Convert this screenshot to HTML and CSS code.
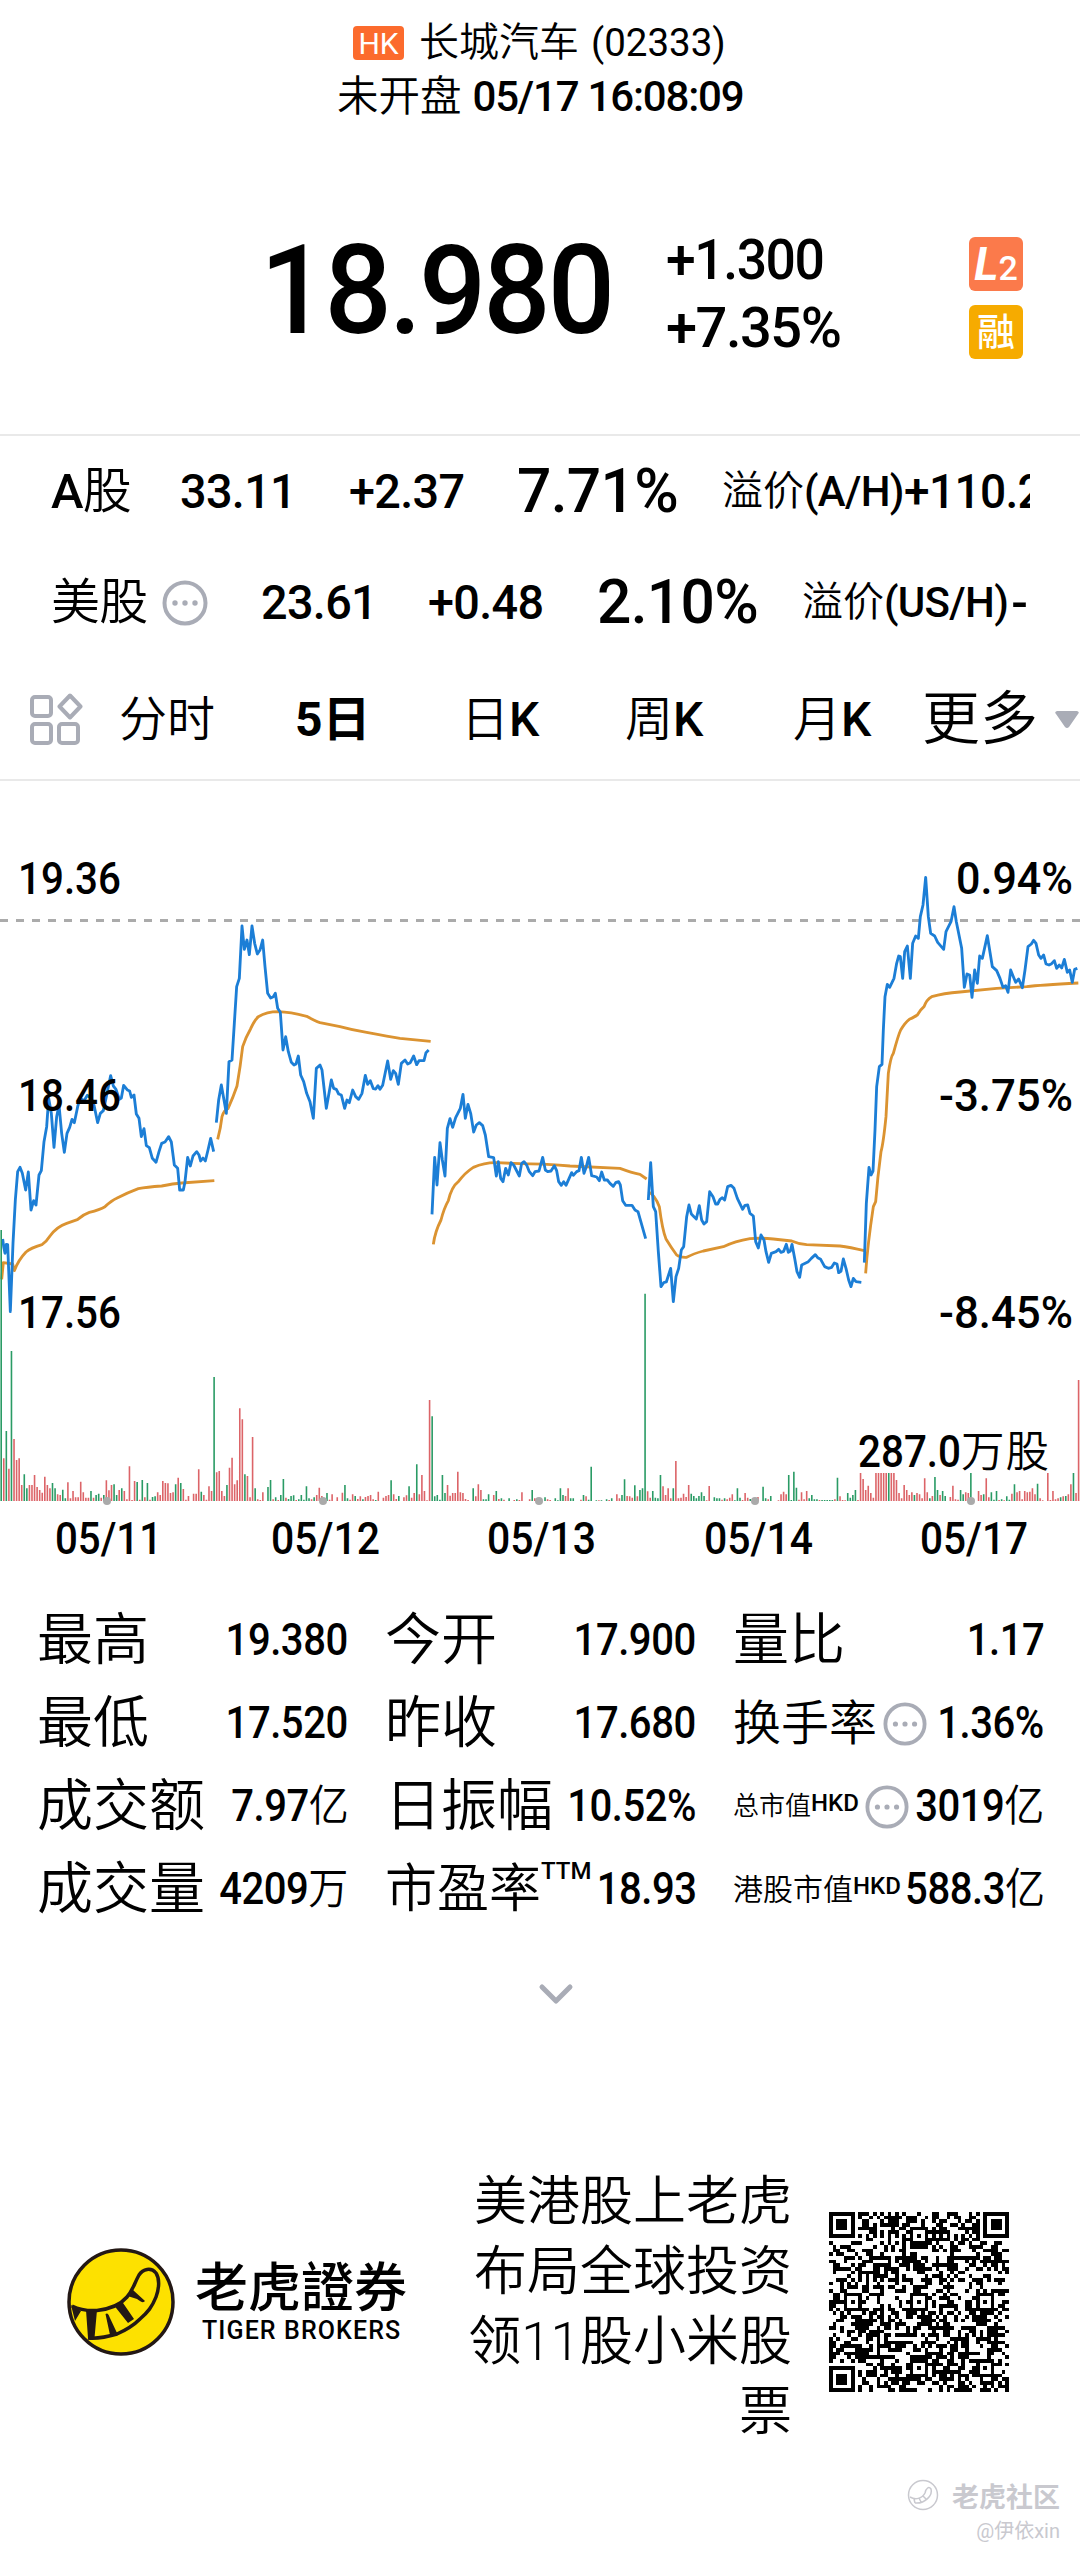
FILE: index.html
```html
<!DOCTYPE html>
<html lang="zh-CN">
<head>
<meta charset="utf-8">
<title>长城汽车 (02333)</title>
<link rel="stylesheet" href="styles.css">
</head>
<body>
<svg class="defs" width="0" height="0">
  <symbol id="more" viewBox="0 0 46 46"><circle cx="23" cy="23" r="20.5" fill="none" stroke="#a9acb6" stroke-width="4"/><g fill="#a9acb6"><circle cx="13" cy="23" r="2.7"/><circle cx="23" cy="23" r="2.7"/><circle cx="33" cy="23" r="2.7"/></g></symbol>
</svg>
<header class="head">
  <div class="title"><span class="hk">HK</span><span class="name">长城汽车</span><span class="code">(02333)</span></div>
  <div class="status"><span class="state">未开盘</span><span class="time">05/17 16:08:09</span></div>
</header>
<section class="price">
  <div class="last"><span>18.980</span></div>
  <div class="change"><div class="narrow">+1.300</div><div>+7.35%</div></div>
  <div class="badges">
    <div class="badge l2"><i>L</i><b>2</b></div>
    <div class="badge rong">融</div>
  </div>
</section>
<section class="markets">
  <div class="market market-a"><span>A<span class="cn">股</span></span><span class="narrow">33.11</span><span class="narrow">+2.37</span><span class="pct">7.71%</span><span class="premium"><span class="cjk cn">溢价</span><span class="pair">(A/H)</span><span class="narrow">+110.2</span></span></div>
  <div class="market market-us"><span class="cn">美股</span><svg class="dots" width="46" height="46"><use href="#more"/></svg><span class="narrow">23.61</span><span class="narrow">+0.48</span><span class="pct">2.10%</span><span class="premium"><span class="cjk cn">溢价</span><span class="pair">(US/H)</span><span class="dash">-</span></span></div>
</section>
<nav class="tabs">
  <svg width="54" height="54" viewBox="0 0 54 54" fill="none" stroke="#a9acb6" stroke-width="4" stroke-linejoin="round"><rect x="3" y="4" width="19" height="19" rx="3"/><path d="M41 2.500L51.500 13.500L41 24.500L30.500 13.500Z"/><rect x="3" y="31" width="19" height="19" rx="3"/><rect x="30" y="31" width="19" height="19" rx="3"/></svg>
  <span class="cn">分时</span><span class="active">5日</span><span><span class="cn">日</span>K</span><span><span class="cn">周</span>K</span><span><span class="cn">月</span>K</span><span class="moretab cn">更多</span>
  <svg width="24" height="18" viewBox="0 0 24 18"><path d="M2 0H22Q25 1 23 3L14 16Q12 18 10 16L1 3Q-1 1 2 0Z" fill="#a9acb6"/></svg>
</nav>
<svg class="chart" width="1080" height="818" viewBox="0 781 1080 818">
  <path d="M0 920.500H1080" stroke="#ababab" stroke-width="3" stroke-dasharray="8 8"/>
  <g class="line avg" transform="translate(0 850) scale(.33333)">
    <path d="M5 1288L10 1238L38 1242L43 1262Q55 1230 78 1206Q92 1194 126 1184Q140 1174 150 1158Q170 1130 200 1120L232 1109Q250 1093 268 1087Q300 1079 315 1070Q335 1052 350 1045Q385 1027 415 1016Q440 1011 485 1008Q520 1001 545 999L643 992"/>
    <path d="M653 868Q662 835 666 800Q672 780 684 776Q700 740 711 708Q721 650 728 590Q738 560 752 536Q764 510 775 500Q800 485 835 485Q870 486 920 499Q945 513 960 518L1020 530Q1060 541 1100 547Q1170 560 1200 565L1292 574"/>
  </g>
  <g class="line avg" transform="translate(420 1050) scale(.33333)">
    <path d="M40 583Q45 545 63 510Q72 475 85 452Q95 410 115 395Q135 368 160 352Q195 337 230 338L300 341Q360 341 450 348L600 355Q635 368 660 373L680 387"/>
    <path d="M685 425Q705 435 718 470Q727 540 738 567Q755 595 770 615Q780 623 800 622Q820 611 850 603L910 590Q945 574 990 566Q1020 563 1060 567L1115 573Q1135 582 1160 584L1260 588Q1290 592 1333 602"/>
  </g>
  <g class="line avg" transform="translate(840 850) scale(.33333)">
    <path d="M77 1270Q82 1190 100 1070L107 1055Q113 980 123 905Q130 880 138 800L145 670Q152 620 160 610Q175 555 182 540Q195 518 208 508Q225 500 232 495Q240 480 252 470Q260 448 275 440Q310 430 360 426L470 415L560 410Q600 405 715 399"/>
  </g>
  <g class="line quote" transform="translate(0 850) scale(.33333)">
    <path d="M8 1167L11 1190L15 1210L19 1183L23 1184L31 1385L39 1180L46 1050L53 965L60 952L67 970L77 1020L85 966L93 1080L101 1052L108 1065L117 975L124 962L132 875L140 830L146 745L154 790L162 892L170 800L177 765L185 850L193 907L201 850L209 832L216 808L223 818L233 770L240 745L252 752L262 736L273 745L282 765L293 818L301 790L310 782L317 750L325 710L332 677L340 708L348 718L358 748L364 744L371 706L382 720L389 723L394 742L402 735L409 792L417 805L424 860L432 836L439 887L448 893L457 925L468 937L477 905L485 880L495 876L506 860L514 876L523 945L533 955L539 1020L550 1020L555 995L563 922L571 948L579 918L590 905L597 915L602 933L609 924L616 933L624 900L632 865L641 905"/>
    <path d="M649 818L656 750L664 705L672 750L679 790L687 635L696 630L703 520L710 410L718 385L726 228L733 298L741 270L748 314L756 228L764 280L772 312L780 300L788 270L795 350L803 430L812 444L820 440L826 430L833 475L841 487L849 600L857 560L865 605L874 637L882 645L888 642L895 618L902 675L911 695L920 730L930 755L940 805L949 655L960 645L966 660L979 775L994 690L1001 715L1009 718L1016 732L1024 735L1034 775L1041 750L1048 758L1058 720L1067 740L1076 748L1086 730L1096 676L1103 703L1111 692L1120 716L1127 717L1134 707L1140 718L1148 706L1163 633L1172 688L1180 662L1187 670L1195 703L1204 640L1215 630L1223 642L1231 638L1241 618L1250 644L1257 632L1272 632L1278 608L1286 600"/>
  </g>
  <g class="line quote" transform="translate(420 1050) scale(.33333)">
    <path d="M36 493L44 322L51 405L60 278L67 330L75 378L82 235L90 206L98 232L107 203L121 175L129 133L136 205L144 163L152 190L161 246L169 225L178 218L188 227L196 255L206 320L221 323L229 378L235 335L242 385L249 395L257 355L265 375L273 338L281 345L298 378L305 340L312 335L320 345L328 365L338 377L345 365L357 363L368 322L376 360L383 365L393 363L403 347L410 362L416 395L424 406L431 395L438 406L455 368L460 376L470 365L477 362L484 322L492 370L499 350L506 322L515 377L530 381L538 392L545 366L553 390L562 390L570 400L580 409L588 397L596 395L601 405L608 452L617 466L636 466L645 480L654 485L677 566"/>
    <path d="M685 450L692 338L700 470L707 485L715 605L723 710L731 698L739 696L752 655L760 755L768 680L776 655L784 600L791 590L800 500L807 465L814 492L822 500L829 507L838 467L845 510L852 522L860 515L869 425L879 440L887 462L893 462L900 448L907 443L914 450L923 410L933 406L942 415L952 445L968 478L975 466L983 465L990 490L1000 498L1007 575L1015 594L1023 555L1032 570L1038 605L1046 637L1054 610L1068 605L1076 598L1083 607L1091 604L1099 583L1105 607L1111 603L1116 583L1124 625L1131 665L1139 682L1145 645L1165 635L1174 625L1186 614L1193 623L1202 628L1214 650L1225 655L1235 652L1243 639L1251 642L1256 668L1263 664L1270 627L1278 655L1286 690L1293 710L1300 685L1308 695L1324 697"/>
  </g>
  <g class="line quote" transform="translate(840 850) scale(.33333)">
    <path d="M73 1238L79 1060L87 952L93 975L99 963L105 840L110 710L118 650L126 643L130 540L135 440L142 403L149 412L162 385L170 340L176 318L181 320L188 385L194 305L202 288L211 385L218 280L227 258L235 265L241 200L249 165L257 82L265 200L272 250L284 258L293 277L311 298L318 245L333 215L342 170L349 215L365 295L373 412L381 372L389 375L396 442L404 360L412 400L419 318L427 325L442 257L457 350L470 362L480 385L489 412L497 407L504 427L512 360L520 380L527 397L536 387L547 413L555 360L564 290L574 282L581 271L588 280L596 315L603 325L611 315L618 342L627 345L635 341L643 332L650 355L658 345L665 354L673 328L682 367L689 360L697 397L704 358L712 355"/>
  </g>
  <g id="volume"></g>
  <g fill="#aaa"><circle cx="107" cy="1501" r="4"/><circle cx="323" cy="1501" r="4"/><circle cx="539" cy="1501" r="4"/><circle cx="755" cy="1501" r="4"/><circle cx="971" cy="1501" r="4"/></g>
  <g class="axis">
    <text x="18" y="894" textLength="103" lengthAdjust="spacingAndGlyphs">19.36</text>
    <text x="18" y="1111" textLength="103" lengthAdjust="spacingAndGlyphs">18.46</text>
    <text x="18" y="1328" textLength="103" lengthAdjust="spacingAndGlyphs">17.56</text>
    <text x="956" y="894" textLength="117" lengthAdjust="spacingAndGlyphs">0.94%</text>
    <text x="939" y="1111" textLength="134" lengthAdjust="spacingAndGlyphs">-3.75%</text>
    <text x="939" y="1328" textLength="134" lengthAdjust="spacingAndGlyphs">-8.45%</text>
    <text x="858" y="1467" textLength="103" lengthAdjust="spacingAndGlyphs">287.0</text>
    <text class="cn" x="961" y="1467" textLength="88">万股</text>
    <text x="55" y="1554" textLength="107" lengthAdjust="spacingAndGlyphs">05/11</text>
    <text x="271" y="1554" textLength="109" lengthAdjust="spacingAndGlyphs">05/12</text>
    <text x="487" y="1554" textLength="109" lengthAdjust="spacingAndGlyphs">05/13</text>
    <text x="704" y="1554" textLength="109" lengthAdjust="spacingAndGlyphs">05/14</text>
    <text x="920" y="1554" textLength="108" lengthAdjust="spacingAndGlyphs">05/17</text>
  </g>
</svg>
<section class="stats">
  <div class="stat"><span>最高</span><b>19.380</b></div>
  <div class="stat"><span>今开</span><b>17.900</b></div>
  <div class="stat"><span>量比</span><b>1.17</b></div>
  <div class="stat"><span>最低</span><b>17.520</b></div>
  <div class="stat"><span>昨收</span><b>17.680</b></div>
  <div class="stat"><span class="s48">换手率</span><svg class="dots" width="44" height="44"><use href="#more"/></svg><b>1.36%</b></div>
  <div class="stat"><span>成交额</span><b>7.97<span class="cn">亿</span></b></div>
  <div class="stat"><span>日振幅</span><b>10.52%</b></div>
  <div class="stat"><span class="s26">总市值</span><sup>HKD</sup><svg class="dots" width="44" height="44"><use href="#more"/></svg><b>3019<span class="cn">亿</span></b></div>
  <div class="stat"><span>成交量</span><b>4209<span class="cn">万</span></b></div>
  <div class="stat"><span class="s52">市盈率</span><sup class="ttm">TTM</sup><b>18.93</b></div>
  <div class="stat"><span class="s30">港股市值</span><sup>HKD</sup><b>588.3<span class="cn">亿</span></b></div>
</section>
<div class="expand"><svg width="36" height="24" viewBox="0 0 36 24"><path d="M4 4L18 18L32 4" fill="none" stroke="#a9acb6" stroke-width="5" stroke-linecap="round" stroke-linejoin="round"/></svg></div>
<footer class="foot">
  <svg class="logo" width="108" height="108" viewBox="0 0 108 108"><circle cx="54" cy="54" r="52" fill="#fde100" stroke="#231815" stroke-width="3.500"/>
    <path d="M5 58C13 62 21 63 30 62.500C43 61 54 56 60 49C66 42 67 36 72 27C76 21 84 19 89 25C93 31 92 41 89 49C85 59 81 64 73 71C66 78 59 82 50 86C40 89 32 91 21 90" fill="none" stroke="#231815" stroke-width="3.500"/>
    <path d="M4 57L14 63L8 73ZM19 62L30 62L27.500 90L21 90ZM38.500 66Q41 64 42.500 69L50 85L43 87ZM47.500 58L55 53.500L67 71L61 75ZM60.500 48L66 42L78 53Q76 56 70 51Z" fill="#231815"/></svg>
  <div class="brand"><div class="brand-cn">老虎證券</div><div class="brand-en">TIGER BROKERS</div></div>
  <div class="slogan">美港股上老虎<br>布局全球投资<br>领11股小米股<br>票</div>
  <svg class="qr" id="qr" width="180" height="180" viewBox="0 0 49 49" shape-rendering="crispEdges"></svg>
</footer>
<div class="mark">
  <div class="mark-top"><svg width="34" height="34" viewBox="0 0 34 34" fill="none" stroke="#c9c9cf" stroke-width="1.500"><circle cx="17" cy="17" r="14.500"/><path d="M4 19C9 22 16 21 19 15C20 10 23 8 25 11C27 17 19 26 9 25M8 21L9 25M13 20L15 24M17 18L20 21"/></svg><span>老虎社区</span></div>
  <div class="mark-user">@伊依xin</div>
</div>
<script src="chart.js"></script>
</body>
</html>
```
FILE: styles.css
```css
body { margin: 0; width: 1080px; height: 2556px; overflow: hidden; background: #fff; color: #000; font-family: Roboto, "Noto Sans CJK SC", sans-serif; }
.defs { position: absolute; }
.cn { font-weight: 350; }
.narrow { transform: scaleX(.955); transform-origin: left; }
.head { height: 108px; padding-top: 16px; }
.title, .status { display: flex; align-items: center; height: 54px; line-height: 54px; }
.title { padding-left: 353px; }
.hk { width: 51px; height: 34px; line-height: 35px; border-radius: 4px; background: #fc6b2d; color: #fff; font-size: 30px; text-align: center; margin-right: 15px; }
.name { font-size: 40px; font-weight: 350; margin-right: 12px; }
.code { font-size: 38.5px; }
.status { padding-left: 337px; }
.state { font-size: 41.5px; font-weight: 350; margin-right: 11px; }
.time { font-size: 42px; font-weight: 500; letter-spacing: -1.2px; }
.price { display: flex; height: 312px; box-sizing: border-box; border-bottom: 2px solid #e9e9e9; }
.last { width: 406px; padding-left: 260px; line-height: 333px; font-size: 124px; font-weight: 500; letter-spacing: -3px; }
.last span { display: inline-block; transform: scaleX(.955); transform-origin: left; }
.change { width: 303px; padding-top: 102px; font-size: 56px; line-height: 68px; font-weight: 500; letter-spacing: -1.5px; }
.badges { padding-top: 113px; display: flex; flex-direction: column; gap: 14px; }
.badge { width: 54px; height: 54px; border-radius: 6px; color: #fff; display: flex; justify-content: center; align-items: baseline; line-height: 54px; }
.l2 { background: #fb7a4b; }
.l2 i { font-size: 46px; font-weight: 700; }
.l2 b { font-size: 34px; font-weight: 500; }
.rong { background: #f6ab00; font-size: 38px; font-weight: 500; }
.market { display: grid; align-items: center; height: 111px; line-height: 111px; margin-left: 51px; width: 979px; overflow: hidden; font-size: 49px; font-weight: 500; letter-spacing: -.7px; white-space: nowrap; }
.market-a { grid-template-columns: 129px 169px 168px 205px 308px; }
.market-us { grid-template-columns: 111px 99px 167px 169px 205px 228px; }
.pct { font-size: 60.500px; }
.premium { display: flex; overflow: hidden; }
.premium .cjk { font-size: 41px; letter-spacing: 0; }
.premium .pair { font-size: 42px; }
.premium .narrow { transform: scaleX(.94); }
.dash { margin-left: 3px; }
.tabs { display: grid; grid-template-columns: 90px 176px 166px 164px 168px 129px 133px 24px; align-items: center; height: 123px; padding: 2px 0 0 29px; box-sizing: border-box; border-bottom: 2px solid #e9e9e9; font-size: 48px; font-weight: 500; line-height: 119px; white-space: nowrap; }
.active { font-weight: 700; }
.moretab { font-size: 58px; }
.chart { display: block; }
.line path { fill: none; stroke-width: 8.500; stroke-linejoin: round; }
.avg path { stroke: #db9331; }
.quote path { stroke: #1c7ed6; }
.axis { font-size: 43.5px; font-weight: 500; }
.stats { display: grid; grid-template-columns: 311px 311px 311px; column-gap: 37px; padding-left: 37px; grid-auto-rows: 83px; }
.stat { display: flex; align-items: center; line-height: 83px; font-size: 56px; font-weight: 350; white-space: nowrap; }
.stat b { font-size: 43.5px; font-weight: 500; margin-left: auto; letter-spacing: -.5px; transform: scaleX(.92); transform-origin: right; }
.stat .dots { margin-left: 6px; margin-right: -14px; flex: none; }
.s48 { font-size: 48px; }
.s52 { font-size: 52px; }
.s30 { font-size: 30px; }
.s26 { font-size: 26px; }
.stat sup { font-size: 24px; line-height: 24px; font-weight: 500; margin: -8px -14px 0 0; letter-spacing: 0; vertical-align: 0; }
.stat sup + .dots { margin-left: 20px; }
.stat .ttm { margin-top: -38px; }
.expand { height: 178px; padding: 52px 0 0 538px; box-sizing: border-box; }
.foot { display: flex; height: 371px; align-items: flex-start; }
.logo { margin: 139px 0 0 67px; }
.brand { margin: 143px 0 0 20px; width: 212px; }
.brand-cn { font-family: "Noto Sans CJK TC", sans-serif; font-weight: 500; font-size: 53px; line-height: 64px; }
.brand-en { font-size: 25px; font-weight: 500; line-height: 30px; padding-left: 7px; letter-spacing: 1.1px; white-space: nowrap; }
.slogan { width: 385px; text-align: right; font-size: 53px; font-weight: 350; line-height: 70px; padding-top: 58px; }
.qr { margin: 103px 0 0 37px; }
.mark { color: #c9c9cf; padding-right: 20px; height: 76px; }
.mark-top { display: flex; justify-content: flex-end; align-items: center; gap: 12px; height: 30px; font-size: 27px; font-weight: 700; }
.mark-user { text-align: right; font-size: 20px; line-height: 42px; }
```
FILE: chart.js
```js
const NS = 'http://www.w3.org/2000/svg';

// Turnover bars: colour letter (g = falling, r = rising) and height.
const bars = `g813 r128 g210 r97 g450 r186 r123 r128 r48 g80 g38 r48 r48 r78 r42 r33 r25 r73 r48 r38 g54 g38 r20 r18 g34 g8 r56 r8 r30 r11 r11 r58 r26 r10 r10 g30 r10 g18 g22 r10 g18 r62 r32 r48 g50 g18 r33 g38 r30 r5 r104 r3 r60 g57 r4 g63 r11 g54 r4 g12 g14 r26 r18 r60 r54 r53 r24 r26 g50 r70 g54 r36 r4 r15 r0 r22 r22 r95 g28 r18 r4 r44 r30
g372 r86 r90 r30 r15 g48 r100 r130 r50 r62 r278 r245 g80 r75 r11 r192 g38 r5 r3 r26 r0 g42 g63 r5 g11 r3 g18 g66 r10 g6 g15 g17 r3 g5 g18 g4 g44 g8 r5 g11 r18 r40 r15 r5 g24 r4 r20 r0 r11 r0 r25 g48 g8 r4 r20 g15 r6 r14 g5 r12 r15 r18 r5 g3 r28 r0 r10 r15 r18 g62 r20 r6 g15 r0 r11 r17 g44 r10 r24 g110 r20 r78 r30 r2
r303 g254 g14 g18 g4 g78 g24 r48 r16 r24 r24 r88 r26 r24 r6 r3 r0 g38 r14 r50 r33 g5 g5 g20 r0 r18 g30 r6 g8 r4 r0 g8 r0 r3 g5 r3 r26 r0 r0 r5 g33 r8 r5 r0 r0 g11 r5 r3 r0 g8 g2 g38 g18 r15 r38 g8 g8 r0 r0 r4 g18 r14 g4 g103 r0 g2 r2 g2 r0 g5 r3 g8 r0 r20 r8 g18 g65 r15 r14 r10 g47 r14 g33 g38
g622 r29 r10 g30 g10 g8 g78 r44 r18 r38 r8 g38 r120 r8 r10 r22 r12 r48 g22 g15 g8 g15 g26 g15 r2 r45 r0 g11 g8 g8 r4 g8 r5 r10 r20 g2 g38 g10 r3 r24 r10 g6 r8 r4 r12 r0 g43 g8 r5 g15 r0 r0 r2 r20 r28 r20 g78 g3 g88 g40 r4 r26 r5 r30 g8 g18 g5 g5 r3 g3 g3 g3 g3 g3 r5 g70 r14 r3 r2 g24 g10 g18 g33 r3
r84 r66 r33 r46 r24 r10 r84 r84 r84 r84 r84 g84 r84 r84 r63 r24 r8 r48 r33 r18 r26 g18 r24 r20 r8 r68 r26 g8 r15 g72 g33 r18 g30 g15 r0 r12 r46 r5 r4 g33 g20 r26 r24 g84 r0 r0 r30 r18 g20 r68 r11 g26 g4 g30 r3 g5 r2 g14 g4 r22 g50 r26 r30 r5 r30 r26 r28 r38 r20 g52 r8 r2 r0 r84 r3 r30 r5 r8 g11 r14 g15 r20 r50 g84 r24 r363`.split(/\s+/);
const step = 1077.4 / (bars.length - 1);
const paths = { g: '', r: '' };
bars.forEach((bar, i) => {
  const h = bar.slice(1) / 3;
  if (h) paths[bar[0]] += `M${(1.2 + i * step).toFixed(2)} 1501V${(1501 - h).toFixed(1)}`;
});
for (const [key, colour] of [['r', '#dc6468'], ['g', '#2a9b65']]) {
  const path = document.createElementNS(NS, 'path');
  path.setAttribute('d', paths[key]);
  path.setAttribute('stroke', colour);
  path.setAttribute('stroke-width', '1.6');
  document.getElementById('volume').append(path);
}

// Two-dimensional code: finder and alignment squares, timing tracks, then the data cells.
const n = 49;
const ring = (x, y, cx, cy) => Math.max(Math.abs(x - cx), Math.abs(y - cy));
let seed = 20333;
let cells = '';
for (let y = 0; y < n; y++) {
  for (let x = 0; x < n; x++) {
    seed = (seed * 1103515245 + 12345) % 2147483648;
    let on = (seed >> 16) % 2 === 0;
    if (x === 6 || y === 6) on = (x + y) % 2 === 0;
    for (const [cx, cy] of [[24, 24], [42, 42], [24, 42], [42, 24], [24, 6], [6, 24]]) {
      const d = ring(x, y, cx, cy);
      if (d <= 2) on = d !== 1;
    }
    for (const [cx, cy] of [[3, 3], [45, 3], [3, 45]]) {
      const d = ring(x, y, cx, cy);
      if (d <= 4) on = d !== 2 && d !== 4;
    }
    if (on) cells += `M${x} ${y}h1v1h-1z`;
  }
}
const qr = document.createElementNS(NS, 'path');
qr.setAttribute('d', cells);
document.getElementById('qr').append(qr);
```
